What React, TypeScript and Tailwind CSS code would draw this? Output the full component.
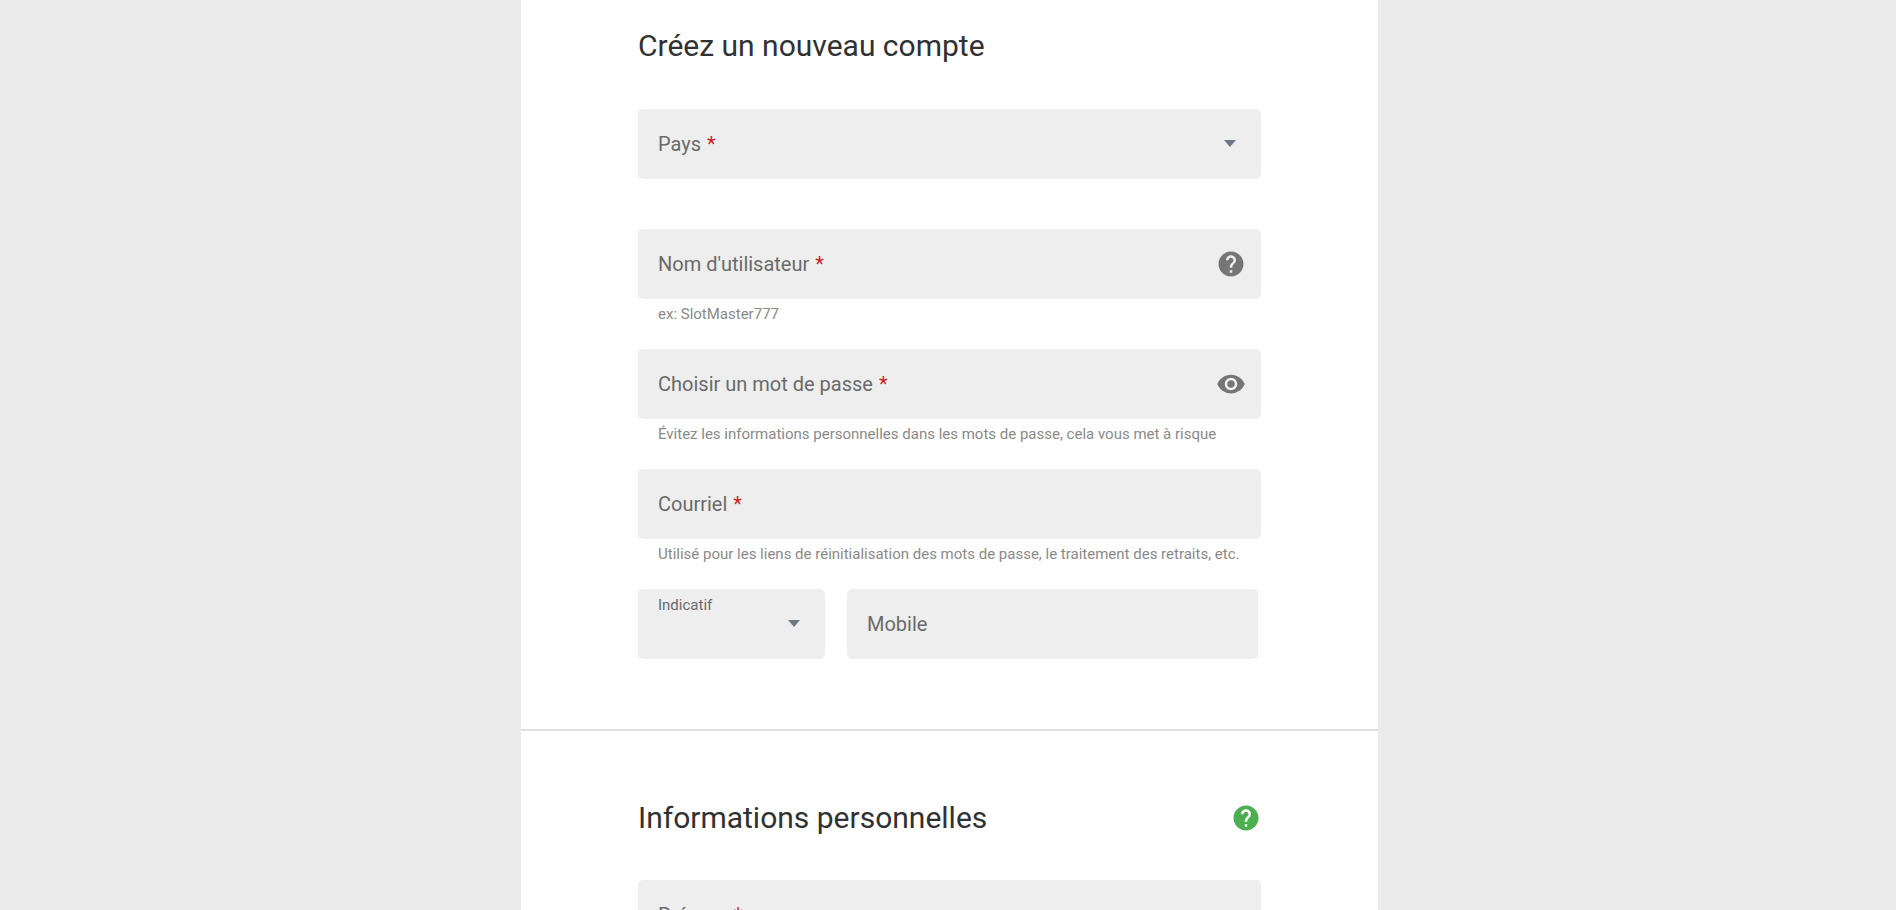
import { useState } from "react";
import type { ReactNode } from "react";
import { clsx } from "clsx";
import { MdHelp, MdVisibility } from "react-icons/md";

const boxClass =
	"peer block h-[70px] w-full appearance-none rounded-[5px] bg-[#eeeeee] px-5 pt-5 text-xl text-[#303133] outline-none";

type FieldProps = {
	id: string;
	label: string;
	type?: string;
	required?: boolean;
	hint?: string;
	action?: ReactNode;
};

const FieldLabel = ({
	id,
	label,
	required,
	floating,
}: {
	id: string;
	label: string;
	required?: boolean;
	floating?: boolean;
}) => (
	<label
		htmlFor={id}
		className={clsx(
			"pointer-events-none absolute left-5 text-[#6a6a6a]",
			floating
				? "top-1 text-[15px] leading-6"
				: "inset-y-0 flex items-center gap-1.5 text-xl",
		)}
	>
		{label}
		{required && <span className="text-[#cc1f1f]">*</span>}
	</label>
);

const Hint = ({ id, text }: { id: string; text?: string }) => (
	<p
		id={id}
		className="h-[50px] px-5 pt-[3px] text-[15px] leading-6 text-[#8a8a8a]"
	>
		{text}
	</p>
);

const TextField = ({
	id,
	label,
	type = "text",
	required,
	hint,
	action,
}: FieldProps) => {
	const [value, setValue] = useState("");

	return (
		<div>
			<div className="relative">
				<input
					id={id}
					name={id}
					type={type}
					value={value}
					required={required}
					aria-describedby={`${id}-hint`}
					onChange={(e) => setValue(e.target.value)}
					className={boxClass}
				/>
				<FieldLabel
					id={id}
					label={label}
					required={required}
					floating={value !== ""}
				/>
				{action && (
					<div className="absolute inset-y-0 right-[15px] flex items-center">
						{action}
					</div>
				)}
			</div>
			<Hint id={`${id}-hint`} text={hint} />
		</div>
	);
};

const SelectField = ({
	id,
	label,
	required,
	options,
	floating,
}: FieldProps & { options: string[]; floating?: boolean }) => {
	const [value, setValue] = useState("");

	return (
		<div>
			<div className="relative">
				<select
					id={id}
					name={id}
					value={value}
					required={required}
					onChange={(e) => setValue(e.target.value)}
					className={boxClass}
				>
					<option value=""></option>
					{options.map((option) => (
						<option key={option} value={option}>
							{option}
						</option>
					))}
				</select>
				<FieldLabel
					id={id}
					label={label}
					required={required}
					floating={floating || value !== ""}
				/>
				<div className="pointer-events-none absolute inset-y-0 right-[25px] flex items-center">
					<svg
						width="12"
						height="8"
						viewBox="0 0 12 8"
						fill="#6b7886"
						aria-hidden="true"
					>
						<path d="M0 0h12L6 7z" />
					</svg>
				</div>
			</div>
			<Hint id={`${id}-hint`} />
		</div>
	);
};

const SectionTitle = ({ children }: { children: ReactNode }) => (
	<h2 className="text-[30px] leading-9 text-[#303133]">{children}</h2>
);

const App = () => {
	const [showPassword, setShowPassword] = useState(false);

	return (
		<main className="min-h-screen bg-[#ebebeb] pl-[3px] font-['Roboto',sans-serif]">
			<form className="mx-auto max-w-[857px] bg-white">
				<section className="px-[117px] pt-7 pb-5">
					<SectionTitle>Créez un nouveau compte</SectionTitle>
					<div className="mt-[45px]">
						<SelectField
							id="pays"
							label="Pays"
							required
							options={["Canada", "France", "Belgique", "Suisse"]}
						/>
						<TextField
							id="utilisateur"
							label="Nom d'utilisateur"
							required
							hint="ex: SlotMaster777"
							action={
								<button
									type="button"
									aria-label="Aide"
									className="cursor-pointer text-[#757575]"
								>
									<MdHelp size={30} />
								</button>
							}
						/>
						<TextField
							id="motdepasse"
							label="Choisir un mot de passe"
							type={showPassword ? "text" : "password"}
							required
							hint="Évitez les informations personnelles dans les mots de passe, cela vous met à risque"
							action={
								<button
									type="button"
									aria-label="Afficher le mot de passe"
									onClick={() => setShowPassword(!showPassword)}
									className="cursor-pointer text-[#757575]"
								>
									<MdVisibility size={30} />
								</button>
							}
						/>
						<TextField
							id="courriel"
							label="Courriel"
							type="email"
							required
							hint="Utilisé pour les liens de réinitialisation des mots de passe, le traitement des retraits, etc."
						/>
						<div className="grid grid-cols-[187fr_411fr] gap-[22px] pr-[3px]">
							<SelectField
								id="indicatif"
								label="Indicatif"
								floating
								options={["+1", "+33", "+32", "+41"]}
							/>
							<TextField id="mobile" label="Mobile" type="tel" />
						</div>
					</div>
				</section>

				<section className="border-t-2 border-[#e0e0e0] px-[117px] pt-[69px]">
					<div className="flex items-center justify-between">
						<SectionTitle>Informations personnelles</SectionTitle>
						<button
							type="button"
							aria-label="Aide"
							className="cursor-pointer text-[#4caf50]"
						>
							<MdHelp size={30} />
						</button>
					</div>
					<div className="mt-11">
						<TextField id="prenom" label="Prénom" required />
					</div>
				</section>
			</form>
		</main>
	);
};

export default App;
